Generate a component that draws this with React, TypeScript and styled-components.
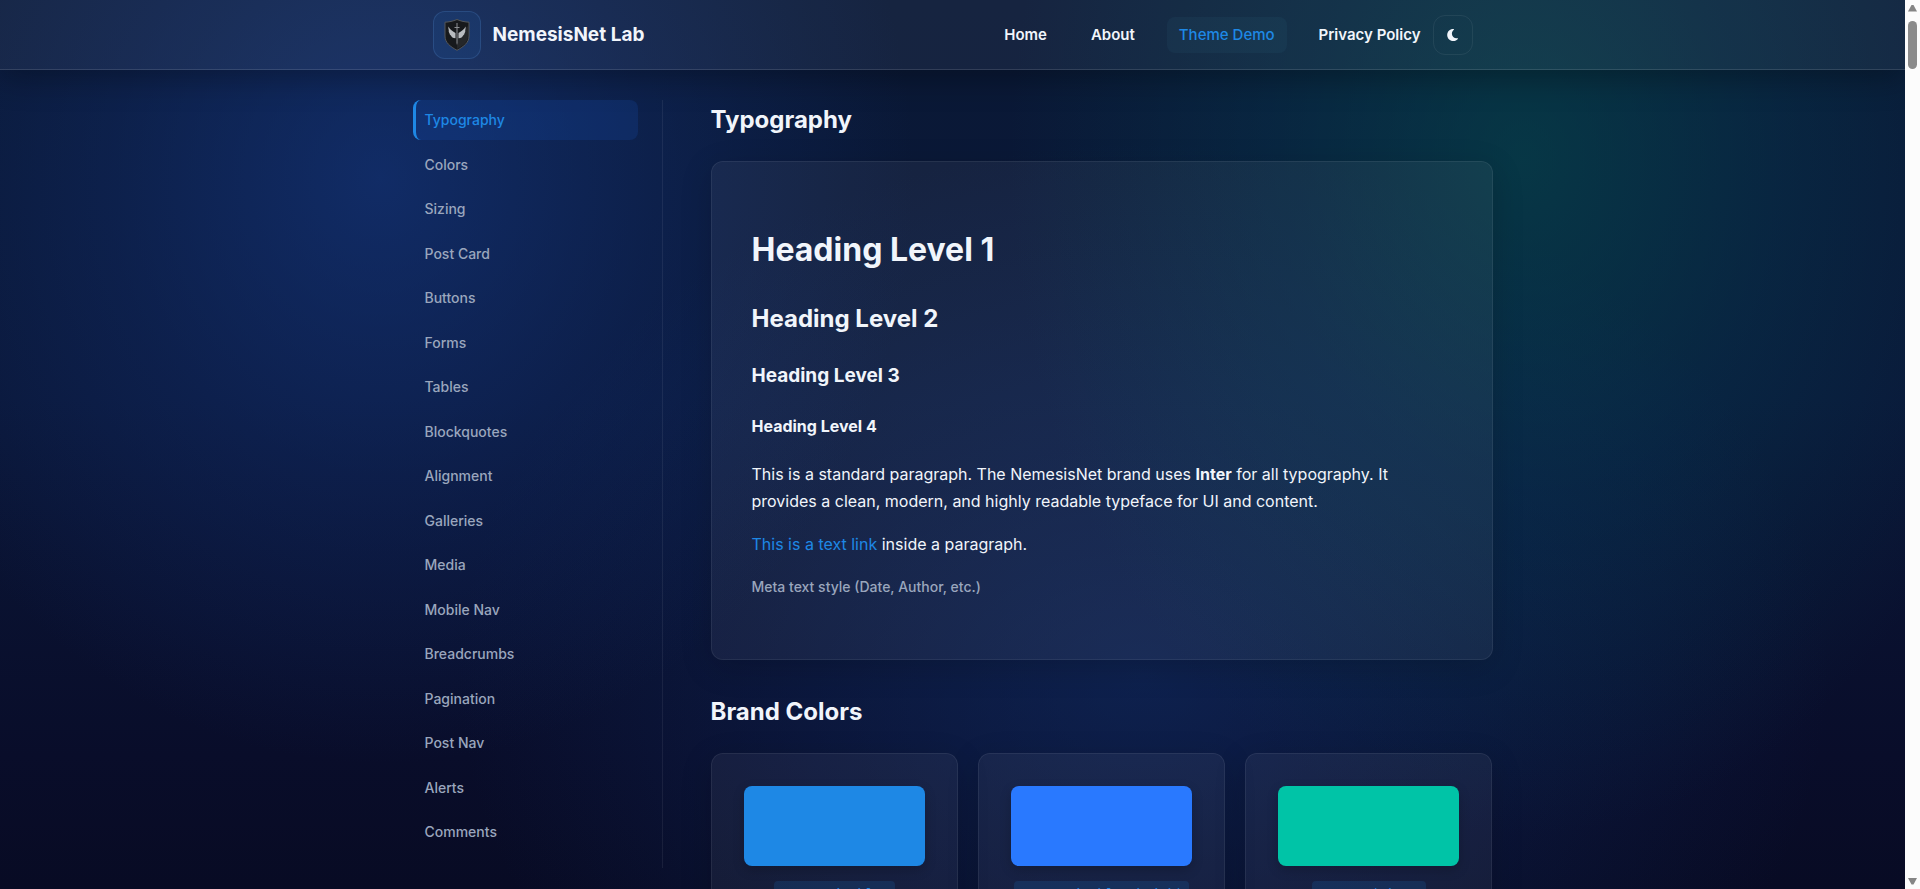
import React from "react";
import styled, { createGlobalStyle } from "styled-components";

const color = {
  text: "#f1f5fb",
  muted: "#9aa6bd",
  blue: "#1e88e5",
  line: "rgba(255, 255, 255, 0.065)",
  panel: "rgba(255, 255, 255, 0.05)",
};

const GlobalStyle = createGlobalStyle`
  *, *::before, *::after { box-sizing: border-box; }
  body {
    margin: 0;
    overflow: hidden;
    background: #080b24;
    color: ${color.text};
    font-family: Inter, "Liberation Sans", sans-serif;
    font-size: 16px;
    line-height: 27px;
  }
  a { color: inherit; text-decoration: none; }
  h1, h2, h3, h4, p, ul { margin: 0; padding: 0; }
  ul { list-style: none; }
`;

const Shell = styled.div`
  display: flex;
  height: 100vh;
  overflow: hidden;
`;

const Page = styled.div`
  flex: 1;
  min-width: 0;
  overflow: hidden;
  background:
    radial-gradient(ellipse 28% 66% at 20% 20%, rgba(22, 58, 136, 0.58), rgba(20, 52, 124, 0.3) 50%, transparent),
    radial-gradient(ellipse 27% 76% at 80% 18%, rgba(4, 80, 82, 0.55), rgba(4, 72, 90, 0.28) 50%, transparent),
    radial-gradient(ellipse 36% 60% at 60% 76%, rgba(20, 58, 124, 0.42), rgba(18, 54, 118, 0.2) 55%, transparent),
    linear-gradient(180deg, #0a1936 0%, #0a1738 45%, #090d2a 85%, #080b24 100%);
`;

const Header = styled.header`
  height: 70px;
  border-bottom: 1px solid rgba(255, 255, 255, 0.12);
  background: rgba(255, 255, 255, 0.05);
  box-shadow: 0 8px 32px rgba(0, 0, 0, 0.3);
`;

const HeaderInner = styled.div`
  display: flex;
  align-items: center;
  justify-content: space-between;
  max-width: 1080px;
  height: 100%;
  margin: 0 auto;
  padding: 0 20px;
`;

const Brand = styled.a`
  display: flex;
  align-items: center;
  gap: 12px;
  font-size: 19px;
  font-weight: 700;
`;

const LogoBox = styled.span`
  display: grid;
  place-items: center;
  width: 48px;
  height: 48px;
  border: 1px solid rgba(120, 180, 255, 0.16);
  border-radius: 12px;
  background: rgba(30, 136, 229, 0.09);
`;

const HeaderRight = styled.div`
  display: flex;
  align-items: center;
`;

const Nav = styled.nav`
  display: flex;
  gap: 20px;
`;

const NavLink = styled.a<{ $active?: boolean }>`
  padding: 5px 12px;
  border-radius: 8px;
  font-size: 15px;
  line-height: 26px;
  font-weight: ${(p) => (p.$active ? 500 : 600)};
  color: ${(p) => (p.$active ? color.blue : color.text)};
  background: ${(p) => (p.$active ? "rgba(60, 120, 150, 0.1)" : "transparent")};
`;

const ThemeButton = styled.button`
  display: grid;
  place-items: center;
  width: 40px;
  height: 40px;
  padding: 0;
  border: 1px solid ${color.line};
  border-radius: 12px;
  background: transparent;
  color: ${color.text};
`;

const Layout = styled.div`
  display: flex;
  align-items: flex-start;
  gap: 48px;
  max-width: 1080px;
  margin: 0 auto;
  padding-top: 30px;
`;

const Sidebar = styled.aside`
  flex: 0 0 250px;
  padding: 0 24px 16px 0;
  border-right: 1px solid ${color.line};
`;

const SideList = styled.ul`
  display: flex;
  flex-direction: column;
  justify-content: space-between;
  height: 752px;
`;

const SideLink = styled.a<{ $active?: boolean }>`
  display: block;
  padding: 7px 9px;
  border-left: 3px solid ${(p) => (p.$active ? color.blue : "transparent")};
  border-radius: 8px;
  font-size: 14px;
  line-height: 26px;
  font-weight: 500;
  color: ${(p) => (p.$active ? color.blue : color.muted)};
  background: ${(p) => (p.$active ? "rgba(30, 100, 229, 0.15)" : "transparent")};
`;

const Main = styled.main`
  flex: 1;
  min-width: 0;
`;

const Section = styled.section`
  margin-bottom: 32px;
`;

const SectionTitle = styled.h2`
  margin-bottom: 21px;
  font-size: 24px;
  line-height: 40px;
  font-weight: 700;
`;

const Panel = styled.div`
  border: 1px solid ${color.line};
  border-radius: 12px;
  background: ${color.panel};
  box-shadow: 0 8px 32px rgba(0, 0, 0, 0.16);
`;

const TypePanel = styled(Panel)`
  padding: 68px 40px 59px;
`;

const H1 = styled.h1`
  margin-bottom: 33px;
  font-size: 32px;
  line-height: 40px;
`;
const H2 = styled.h2`
  margin-bottom: 28px;
  font-size: 24px;
  line-height: 32px;
`;
const H3 = styled.h3`
  margin-bottom: 26px;
  font-size: 19px;
  line-height: 26px;
`;
const H4 = styled.h4`
  margin-bottom: 24px;
  font-size: 16px;
  line-height: 22px;
`;
const Text = styled.p`
  margin-bottom: 16px;
`;
const TextLink = styled.a`
  color: ${color.blue};
`;
const Meta = styled.p`
  font-size: 14px;
  line-height: 26px;
  font-weight: 500;
  color: ${color.muted};
`;

const Swatches = styled.div`
  display: grid;
  grid-template-columns: repeat(3, 1fr);
  gap: 20px;
`;

const SwatchCard = styled(Panel)`
  display: flex;
  flex-direction: column;
  align-items: center;
  gap: 15px;
  padding: 32px;
`;

const Swatch = styled.div<{ $fill: string }>`
  align-self: stretch;
  height: 80px;
  border-radius: 8px;
  background: ${(p) => p.$fill};
  box-shadow: 0 4px 12px rgba(0, 0, 0, 0.2);
`;

const Code = styled.code`
  padding: 3px 6px;
  border-radius: 4px;
  background: rgba(30, 136, 229, 0.15);
  color: ${color.blue};
  font-family: "Liberation Mono", monospace;
  font-size: 13px;
  line-height: 20px;
`;

const ScrollTrack = styled.div`
  display: flex;
  flex-direction: column;
  align-items: center;
  flex: 0 0 15px;
  padding: 4px 0;
  background: #fcfcfc;
`;

const ScrollThumb = styled.div`
  width: 9px;
  height: 48px;
  margin: 9px 0 auto;
  border-radius: 5px;
  background: #8b8b8b;
`;

const Logo = () => (
  <svg width="28" height="34" viewBox="0 0 28 34" aria-hidden="true">
    <path d="M14 1.5C10 3.2 6 4 2 4.2V18c0 6.500 5 10.500 12 14.300C21 28.500 26 24.500 26 18V4.200C22 4 18 3.200 14 1.500Z" fill="#17191c" stroke="#55575a" strokeWidth="1" />
    <path d="M14 31V18L25 8v10c0 6-4.500 9.500-11 13Z" fill="#25272a" />
    <path d="M5.500 8.500c1.200 3 3.600 4.300 7 6.500v5.200c-2.600-.1-4-1.200-4.600-2.800-.9-.4-1.300-1.200-1.400-2.200-.8-1-.9-2-.7-3-.5-1.200-.6-2.500-.3-3.700Z" fill="#b9bcc0" />
    <path d="M22.500 8.500c-1.200 3-3.600 4.300-7 6.500v5.200c2.600-.1 4-1.200 4.600-2.800.9-.4 1.300-1.200 1.400-2.200.8-1 .9-2 .7-3 .5-1.200.6-2.500.3-3.700Z" fill="#b9bcc0" />
    <path d="M13.500 5h1v20l-.5 2-.5-2ZM11.500 9h5v1h-5Z" fill="#8d9094" />
  </svg>
);

const Moon = () => (
  <svg width="14" height="14" viewBox="0 0 14 14" aria-hidden="true">
    <path d="M7.200 1C3.800 1 1.200 3.600 1.200 7s2.700 6 6 6c2 0 3.700-.9 4.800-2.300.2-.3 0-.6-.4-.5C8.500 10.700 5.900 8.700 5.900 5.800c0-1.700.8-3.200 2-4 .3-.3.100-.8-.7-.8Z" fill="currentColor" />
  </svg>
);

const Arrow = ({ down = false }: { down?: boolean }) => (
  <svg width="9" height="8" viewBox="0 0 9 8" aria-hidden="true">
    <path d={down ? "M0 1h9L5.500 7.500h-2Z" : "M0 7.500h9L5.500 1h-2Z"} fill="#858585" />
  </svg>
);

const navItems = ["Home", "About", "Theme Demo", "Privacy Policy"];
const sideItems = [
  "Typography", "Colors", "Sizing", "Post Card", "Buttons", "Forms",
  "Tables", "Blockquotes", "Alignment", "Galleries", "Media", "Mobile Nav",
  "Breadcrumbs", "Pagination", "Post Nav", "Alerts", "Comments",
];
const swatches = [
  { name: "--nemesis-blue", fill: "#1e88e5" },
  { name: "--nemesis-blue-bright", fill: "#2979ff" },
  { name: "--accent-base", fill: "#00c4a7" },
];

export default function App() {
  return (
    <>
      <GlobalStyle />
      <Shell>
        <Page>
          <Header>
            <HeaderInner>
              <Brand href="#home">
                <LogoBox><Logo /></LogoBox>
                NemesisNet Lab
              </Brand>
              <HeaderRight>
                <Nav>
                  {navItems.map((item) => (
                    <NavLink key={item} href="#nav" $active={item === "Theme Demo"}>{item}</NavLink>
                  ))}
                </Nav>
                <ThemeButton type="button" aria-label="Toggle theme"><Moon /></ThemeButton>
              </HeaderRight>
            </HeaderInner>
          </Header>
          <Layout>
            <Sidebar>
              <SideList>
                {sideItems.map((item, i) => (
                  <li key={item}>
                    <SideLink href="#section" $active={i === 0}>{item}</SideLink>
                  </li>
                ))}
              </SideList>
            </Sidebar>
            <Main>
              <Section>
                <SectionTitle>Typography</SectionTitle>
                <TypePanel>
                  <H1>Heading Level 1</H1>
                  <H2>Heading Level 2</H2>
                  <H3>Heading Level 3</H3>
                  <H4>Heading Level 4</H4>
                  <Text>
                    This is a standard paragraph. The NemesisNet brand uses <strong>Inter</strong> for
                    all typography. It provides a clean, modern, and highly readable typeface for UI
                    and content.
                  </Text>
                  <Text>
                    <TextLink href="#link">This is a text link</TextLink> inside a paragraph.
                  </Text>
                  <Meta>Meta text style (Date, Author, etc.)</Meta>
                </TypePanel>
              </Section>
              <Section>
                <SectionTitle>Brand Colors</SectionTitle>
                <Swatches>
                  {swatches.map((s) => (
                    <SwatchCard key={s.name}>
                      <Swatch $fill={s.fill} />
                      <Code>{s.name}</Code>
                    </SwatchCard>
                  ))}
                </Swatches>
              </Section>
            </Main>
          </Layout>
        </Page>
        <ScrollTrack aria-hidden="true">
          <Arrow />
          <ScrollThumb />
          <Arrow down />
        </ScrollTrack>
      </Shell>
    </>
  );
}
